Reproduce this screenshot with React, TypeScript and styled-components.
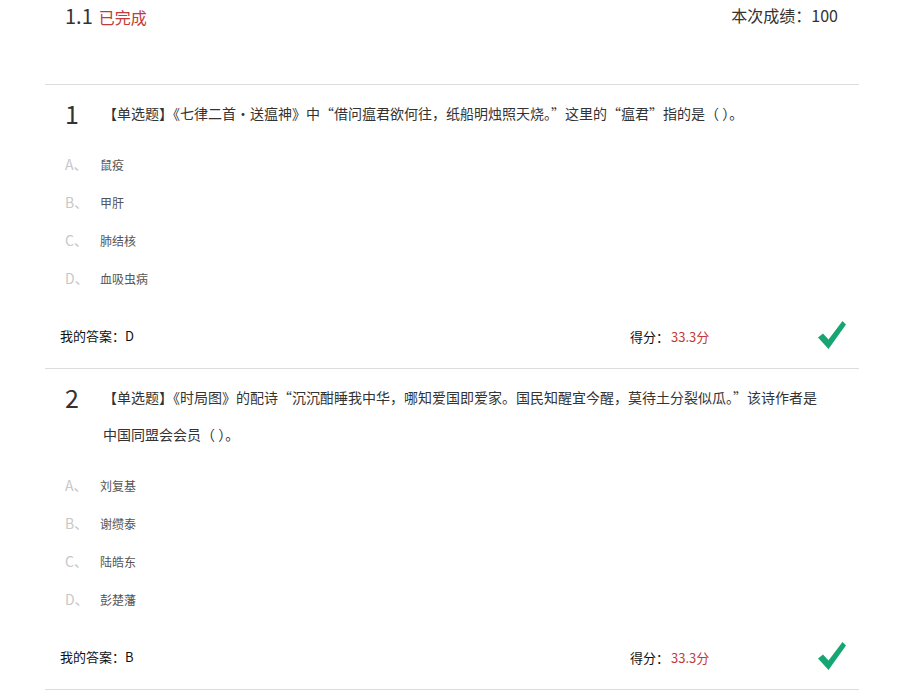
import React from "react";
import styled, { createGlobalStyle } from "styled-components";

const Global = createGlobalStyle`
  html, body { margin: 0; padding: 0; background: #fff; }
  body { font-family: "Noto Sans CJK SC", "Noto Sans", sans-serif; color: #333; }
`;

const Page = styled.div`
  width: 814px;
  margin-left: 45px;
`;

const Header = styled.div`
  display: flex;
  justify-content: space-between;
  align-items: center;
  height: 30px;
  padding: 0 21px 0 20px;
  margin-bottom: 54px;
`;

const HeaderLeft = styled.div`
  display: flex;
  align-items: baseline;
  gap: 6px;
`;

const Chapter = styled.span`
  font-size: 20px;
  color: #333;
`;

const Status = styled.span`
  font-size: 16px;
  color: #c4393b;
`;

const Total = styled.span`
  font-size: 16px;
  color: #333;
`;

const Question = styled.div`
  border-top: 1px solid #dcdcdc;
  padding: 10px 0 14px;
`;

const TitleRow = styled.div`
  display: flex;
  padding-left: 20px;
`;

const Num = styled.div`
  width: 38px;
  flex-shrink: 0;
  font-size: 25px;
  line-height: 37px;
  color: #333;
`;

const Title = styled.div`
  width: 722px;
  font-size: 14px;
  line-height: 37px;
  color: #333;
`;

const Options = styled.ul`
  list-style: none;
  margin: 13px 0 0;
  padding: 0 0 0 20px;
`;

const Option = styled.li`
  display: flex;
  align-items: center;
  height: 38px;
  font-size: 12px;
`;

const Letter = styled.span`
  width: 35px;
  font-size: 14px;
  color: #c8c8c8;
`;

const OptionText = styled.span`
  color: #555;
`;

const AnswerRow = styled.div`
  display: flex;
  align-items: center;
  height: 38px;
  margin-top: 19px;
  padding: 0 13px 0 15px;
`;

const MyAnswer = styled.div`
  flex: 1;
  font-size: 13px;
  color: #111;
`;

const ScoreLabel = styled.span`
  font-size: 13px;
  color: #111;
`;

const ScoreValue = styled.span`
  font-size: 13px;
  color: #c4393b;
  margin-left: 2px;
`;

const Score = styled.div`
  width: 188px;
`;

const Check = styled.svg`
  width: 28px;
  height: 28px;
  display: block;
`;

const Bottom = styled.div`
  border-top: 1px solid #dcdcdc;
`;

type Q = {
  n: number;
  title: string;
  options: string[];
  answer: string;
};

const questions: Q[] = [
  {
    n: 1,
    title:
      "【单选题】《七律二首·送瘟神》中“借问瘟君欲何往，纸船明烛照天烧。”这里的“瘟君”指的是（ ）。",
    options: ["鼠疫", "甲肝", "肺结核", "血吸虫病"],
    answer: "D",
  },
  {
    n: 2,
    title:
      "【单选题】《时局图》的配诗“沉沉酣睡我中华，哪知爱国即爱家。国民知醒宜今醒，莫待土分裂似瓜。”该诗作者是中国同盟会会员（ ）。",
    options: ["刘复基", "谢缵泰", "陆皓东", "彭楚藩"],
    answer: "B",
  },
];

const letters = ["A、", "B、", "C、", "D、"];

export default function App() {
  return (
    <>
      <Global />
      <Page>
        <Header>
          <HeaderLeft>
            <Chapter>1.1</Chapter>
            <Status>已完成</Status>
          </HeaderLeft>
          <Total>本次成绩：100</Total>
        </Header>
        {questions.map((q) => (
          <Question key={q.n}>
            <TitleRow>
              <Num>{q.n}</Num>
              <Title>{q.title}</Title>
            </TitleRow>
            <Options>
              {q.options.map((o, i) => (
                <Option key={o}>
                  <Letter>{letters[i]}</Letter>
                  <OptionText>{o}</OptionText>
                </Option>
              ))}
            </Options>
            <AnswerRow>
              <MyAnswer>我的答案：{q.answer}</MyAnswer>
              <Score>
                <ScoreLabel>得分：</ScoreLabel>
                <ScoreValue>33.3分</ScoreValue>
              </Score>
              <Check viewBox="0 0 28 28">
                <path d="M0 16.5 L5 12.5 L10.5 18.5 L24.5 0 L28 3.5 L10.5 28 Z" fill="#17a673" />
              </Check>
            </AnswerRow>
          </Question>
        ))}
        <Bottom />
      </Page>
    </>
  );
}
